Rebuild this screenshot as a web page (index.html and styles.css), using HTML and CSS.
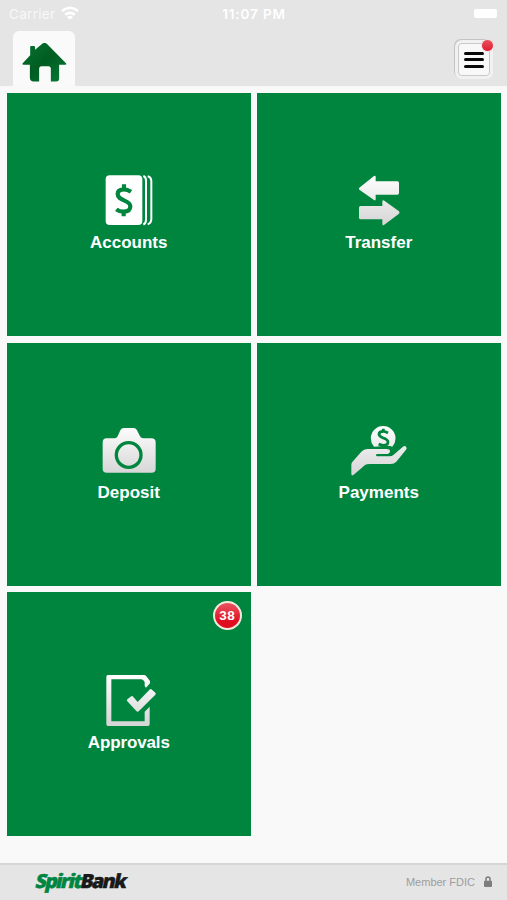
FILE: index.html
```html
<!DOCTYPE html>
<html lang="en">
<head>
<meta charset="utf-8">
<title>SpiritBank</title>
<link rel="stylesheet" href="styles.css">
</head>
<body>
<div class="app">
  <header class="header">
    <div class="status">
      <div class="carrier">
        <span class="carrier-name">Carrier</span>
        <svg class="wifi" viewBox="0 0 18 14"><g fill="none" stroke="#fff" stroke-width="2.6"><path d="M1 5.1Q9-1.6 17 5.1"/><path d="M4.2 8.8Q9 4.8 13.8 8.8"/></g><path d="M6 10.9Q9 8.7 12 10.9L9 13.8Z" fill="#fff"/></svg>
      </div>
      <span class="clock">11:07 PM</span>
      <span class="battery"></span>
    </div>
    <div class="nav">
      <a class="home">
        <svg viewBox="0 0 46 40">
          <defs><linearGradient id="house" x1="0" y1="0" x2="1" y2="1"><stop offset="0" stop-color="#087331"/><stop offset=".5" stop-color="#005c20"/><stop offset="1" stop-color="#087c39"/></linearGradient></defs>
          <path fill="url(#house)" d="M8.3 4.2q0-1.200 1.200-1.200h2.600q1.200 0 1.200 1.200V7L20.400.9Q23-1 25.600.9L44.800 20.400q1.400 1.800-.4 1.800H38V36.500q0 3-3 3h-5.500V26.500q0-2.700-2.500-2.700h-7q-2.500 0-2.500 2.700V39.500H12q-4 0-4-4V22.200H1.500q-2 0-.6-1.700L8.300 12.500Z"/>
        </svg>
      </a>
      <div class="menu"><i></i><i></i><i></i><b class="dot"></b></div>
    </div>
  </header>

  <main class="tiles">
    <a class="tile">
      <svg class="icon" viewBox="57 27 180 162">
        <defs><linearGradient id="silver" gradientUnits="userSpaceOnUse" x1="0" y1="30" x2="0" y2="180"><stop offset="0" stop-color="#fff"/><stop offset="1" stop-color="#d5d5d5"/></linearGradient></defs>
        <rect x="77" y="31" width="110" height="149" rx="12" fill="#fff"/>
        <path d="M190 33q8 3 8 14V164q0 11-8 15M203 34q11 3 11 15V162q0 12-11 16" fill="none" stroke="#fff" stroke-width="6"/>
        <path d="M153 80Q142 73 132 73C119 73 113 79 113 87C113 97 121 101 132 106C144 111 151 115 151 124C151 135 144 140 131 140Q118 140 109 133M132 58V75M131 138V154" fill="none" stroke="#00853f" stroke-width="12.500"/>
      </svg>
      <span class="label">Accounts</span>
    </a>
    <a class="tile">
      <svg class="icon" viewBox="57 27 180 162">
        <g fill="url(#silver)"><path d="M88 68L132 33Q137 31 137 36V49H202Q207 49 207 54V84Q207 89 202 89H137V103Q137 108 132 105L88 74Q85 71 88 68Z"/>
        <path d="M207 139L163 107Q157 104 157 110V123H92Q87 123 87 128V158Q87 163 92 163H157V177Q157 183 163 179L207 146Q210 143 207 139Z"/></g>
      </svg>
      <span class="label">Transfer</span>
    </a>
    <a class="tile">
      <svg class="icon" viewBox="57 27 180 162">
        <path fill="url(#silver)" d="M80 70H104Q110 70 113 64L121 46Q124 39 132 39H160Q168 39 171 46L180 64Q183 70 190 70H214Q227 70 227 82V162Q227 173 215 173H80Q68 173 68 161V82Q68 70 80 70Z"/>
        <circle cx="146" cy="120" r="37" fill="none" stroke="#00853f" stroke-width="10"/>
      </svg>
      <span class="label">Deposit</span>
    </a>
    <a class="tile">
      <svg class="icon" viewBox="57 27 180 162">
        <path fill="url(#silver)" d="M132 95A37 37 0 1 1 187 95Q181 92 174 92Z"/>
        <path d="M174 54Q166 49 160 49C151 49 147 53 147 58C147 64 153 66 160 69C168 72 174 76 174 81C174 88 168 91 160 91Q153 91 146 87M160 41V50M160 90V97" fill="none" stroke="#00853f" stroke-width="8.500"/>
        <path fill="url(#silver)" d="M66 181Q64 180 64 176V149Q64 143 69 139L94 110Q101 102 112 102H169Q180 102 180 109Q180 116 171 117H142Q138 117 138 121Q138 124 142 124H179Q186 124 190 120L219 95Q224 91 228 95Q232 99 228 104L199 140Q193 147 182 147H119Q110 147 105 150L73 178Q69 182 66 181Z"/>
      </svg>
      <span class="label">Payments</span>
    </a>
    <a class="tile">
      <svg class="icon" viewBox="57 27 180 162">
        <path fill="url(#silver)" d="M84 30H192Q196 30 199 34L210 48V55L198 68L194 63V52Q194 47 185 43H94V169H194V140L209 125V178Q209 183 204 183H84Q79 183 79 178V35Q79 30 84 30Z"/>
        <path fill="url(#silver)" d="M142 103L154 94Q157 92 160 96L173 111L210 73Q213 70 216 74L226 83Q229 86 226 89L177 138Q173 142 169 138L142 109Q139 106 142 103Z"/>
      </svg>
      <span class="label approvals">Approvals</span>
      <b class="count">38</b>
    </a>
  </main>

  <footer class="footer">
    <div class="brand"><span class="spirit">Spirit</span><span class="bank">Bank</span></div>
    <div class="member"><span>Member FDIC</span>
      <svg viewBox="0 0 8 11"><path d="M2 5V3Q2 1 4 1T6 3V5" fill="none" stroke="#7d7d7d" stroke-width="1.500"/><rect y="4.700" width="8" height="6.200" rx=".8" fill="#7d7d7d"/></svg>
    </div>
  </footer>
</div>
</body>
</html>
```
FILE: styles.css
```css
* { box-sizing: border-box; }
body {
  margin: 0;
  background: #f9f9f9;
  font-family: "Liberation Sans", Arial, sans-serif;
}
.app {
  display: flex;
  flex-direction: column;
  width: 507px;
  height: 900px;
  overflow: hidden;
}
.header {
  height: 86px;
  flex: none;
  background: #e5e5e5;
}
.status {
  display: grid;
  grid-template-columns: 1fr auto 1fr;
  align-items: center;
  height: 28px;
  padding: 0 10px 0 9px;
  color: #fff;
}
.carrier { display: flex; align-items: center; gap: 6px; }
.carrier-name { font: 13.5px Inter, sans-serif; letter-spacing: .3px; color: #f8f8f8; }
.wifi { width: 18px; height: 14px; margin-top: -2px; }
.clock { font: 600 13.5px Inter, sans-serif; letter-spacing: .85px; margin-left: 2px; }
.battery {
  justify-self: end;
  width: 23px;
  height: 9px;
  margin-top: -2px;
  border-radius: 2px;
  background: #fff;
}
.nav {
  display: flex;
  justify-content: space-between;
  height: 58px;
  padding: 3px 14px 0 13px;
}
.home {
  display: flex;
  justify-content: center;
  width: 62px;
  height: 55px;
  padding-top: 12px;
  border-radius: 6px 6px 0 0;
  background: #fafafa;
}
.home svg { width: 45px; height: 39px; }
.menu {
  position: relative;
  display: flex;
  flex-direction: column;
  align-items: center;
  justify-content: center;
  gap: 3.500px;
  width: 38px;
  height: 39px;
  margin-top: 9px;
  border: 3px solid #f1f1f1;
  border-radius: 7px;
  background: #f8f8f8;
  box-shadow: -1px -1px 0 #c4c4c4, inset 0 0 0 1px #c9c9c9;
}
.menu i { width: 20px; height: 3px; border-radius: 1.500px; background: #080808; }
.dot {
  position: absolute;
  top: -4px;
  right: -4px;
  width: 13px;
  height: 13px;
  border: 1px solid #f4dadd;
  border-radius: 50%;
  background: linear-gradient(#e8505c, #e11d30);
}
.tiles {
  display: grid;
  flex: 1;
  grid-template-columns: 243.500px 243.500px;
  grid-template-rows: repeat(3, 243.300px);
  gap: 6.500px;
  padding: 6.800px 0 0 7px;
}
.tile {
  position: relative;
  display: flex;
  flex-direction: column;
  align-items: center;
  padding-top: 81.400px;
  background: #00853f;
}
.icon { width: 60px; height: 54px; }
.label {
  margin-top: 5px;
  font-size: 17px;
  line-height: 20px;
  font-weight: bold;
  color: #fff;
}
.approvals { letter-spacing: -.12px; }
.count {
  position: absolute;
  top: 9px;
  right: 9px;
  width: 29px;
  height: 29px;
  border: 2px solid #f2e9df;
  border-radius: 50%;
  background: linear-gradient(#e95360, #df0d20 75%);
  color: #fff;
  font-size: 13.500px;
  line-height: 25px;
  letter-spacing: .7px;
  text-indent: .7px;
  text-align: center;
}
.footer {
  display: flex;
  flex: none;
  align-items: center;
  justify-content: space-between;
  height: 37px;
  padding: 0 15px 2px 36px;
  border-top: 2px solid #d5d5d5;
  background: #e5e5e5;
}
.brand {
  font: 800 19.500px/24px "Open Sans", sans-serif;
  letter-spacing: -1.600px;
  -webkit-text-stroke: .4px currentColor;
  transform: translateY(-1px) skewX(-12deg);
}
.spirit { color: #008542; }
.bank { color: #191919; }
.member {
  display: flex;
  align-items: center;
  gap: 9px;
  font-size: 11px;
  color: #9d9d9d;
}
.member svg { width: 8px; height: 11px; }
```
